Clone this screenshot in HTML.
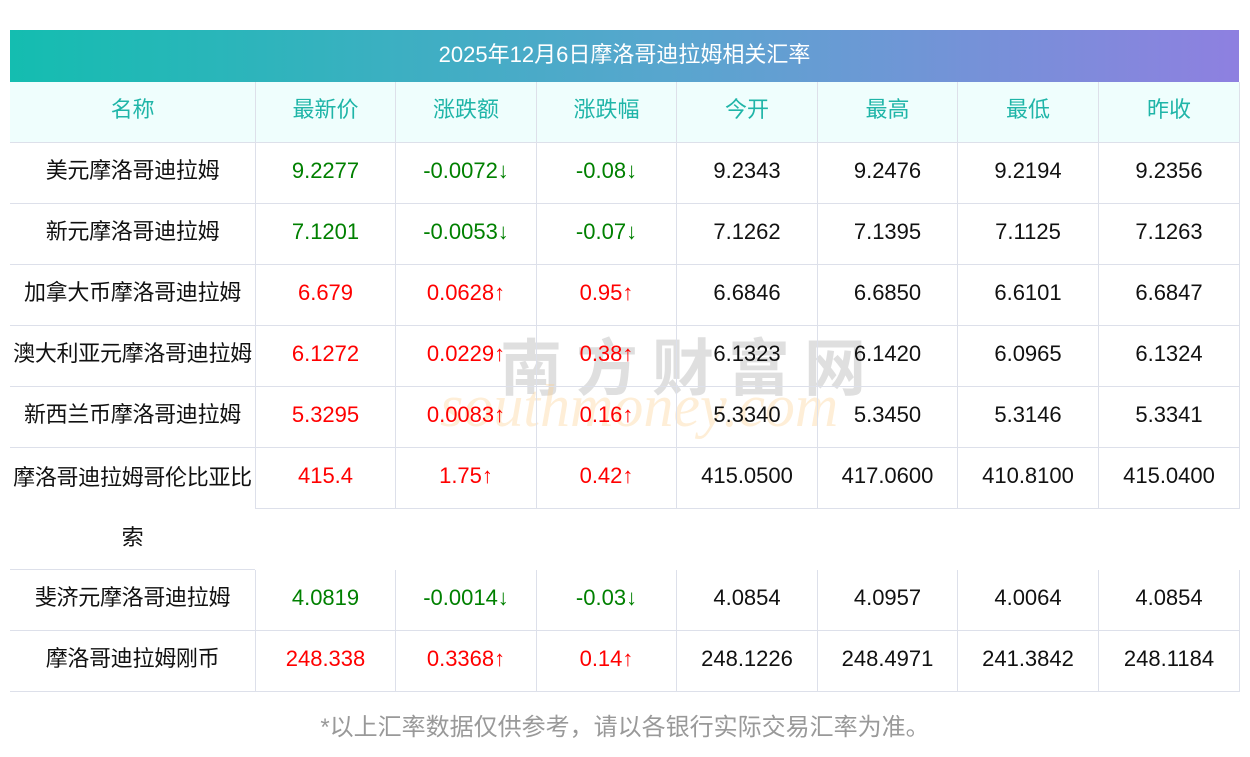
<!DOCTYPE html><html><head><meta charset="utf-8"><style>
body{margin:0;width:1250px;height:757px;background:#fff;position:relative;overflow:hidden;font-family:"Liberation Sans","Noto Sans CJK SC",sans-serif}
.t{position:absolute;left:10px;top:30px;width:1229px;height:52px;background:linear-gradient(90deg,#14bdb0,#5aa5cf 55%,#8e80e0);color:#fff;font-size:22px;text-align:center;line-height:50px}
.c{position:absolute;box-sizing:border-box;text-align:center;font-size:22px;line-height:56px;height:61px;border-bottom:1px solid #dde0ea;border-left:1px solid #dde0ea;color:#111;white-space:nowrap}
.h{background:#effefd;color:#1fb5a8}
.g{color:#008000}.r{color:#f00}
.wm{position:absolute;font-size:62px;color:rgba(150,150,150,.3);left:500px;top:318px;letter-spacing:14px;font-weight:bold}
.wm2{position:absolute;font-size:60px;color:rgba(253,205,140,.35);left:440px;top:372px;font-style:italic;font-family:"Liberation Serif",serif}
.f{position:absolute;top:707px;width:1250px;text-align:center;color:#999;font-size:24px}
</style></head><body>
<div class="t">2025年12月6日摩洛哥迪拉姆相关汇率</div>
<div class="wm">南方财富网</div><div class="wm2">southmoney.com</div>
<div id="g"></div>
<div class="f">*以上汇率数据仅供参考，请以各银行实际交易汇率为准。</div>
<script>
var xs=[10,255,395,536,676,817,957,1098,1239];
var rows=[["h","名称","最新价","涨跌额","涨跌幅","今开","最高","最低","昨收"],
["g","美元摩洛哥迪拉姆","9.2277","-0.0072↓","-0.08↓","9.2343","9.2476","9.2194","9.2356"],
["g","新元摩洛哥迪拉姆","7.1201","-0.0053↓","-0.07↓","7.1262","7.1395","7.1125","7.1263"],
["r","加拿大币摩洛哥迪拉姆","6.679","0.0628↑","0.95↑","6.6846","6.6850","6.6101","6.6847"],
["r","澳大利亚元摩洛哥迪拉姆","6.1272","0.0229↑","0.38↑","6.1323","6.1420","6.0965","6.1324"],
["r","新西兰币摩洛哥迪拉姆","5.3295","0.0083↑","0.16↑","5.3340","5.3450","5.3146","5.3341"],
["r","摩洛哥迪拉姆哥伦比亚比<br>索","415.4","1.75↑","0.42↑","415.0500","417.0600","410.8100","415.0400"],
["g","斐济元摩洛哥迪拉姆","4.0819","-0.0014↓","-0.03↓","4.0854","4.0957","4.0064","4.0854"],
["r","摩洛哥迪拉姆刚币","248.338","0.3368↑","0.14↑","248.1226","248.4971","241.3842","248.1184"]];
var h="",y=82;
rows.forEach(function(r,i){
 var big=i==6;
 for(var j=1;j<9;j++){
  var cls="c";
  if(r[0]=="h")cls+=" h";else if(j>=2&&j<=4)cls+=" "+r[0];
  var hh=(big&&j==1)?122:61;
  var st="left:"+xs[j-1]+"px;top:"+y+"px;width:"+(xs[j]-xs[j-1]+(j==8?1:0))+"px;height:"+hh+"px;";
  if(j==1)st+="border-left:none;letter-spacing:-0.3px;";
  if(big&&j==1)st+="line-height:60px;";
  if(j==8)st+="border-right:1px solid #dde0ea;";
  h+='<div class="'+cls+'" style="'+st+'">'+r[j]+'</div>';
 }
 y+=big?122:61;
});
document.getElementById("g").innerHTML=h;
</script>
</body></html>
